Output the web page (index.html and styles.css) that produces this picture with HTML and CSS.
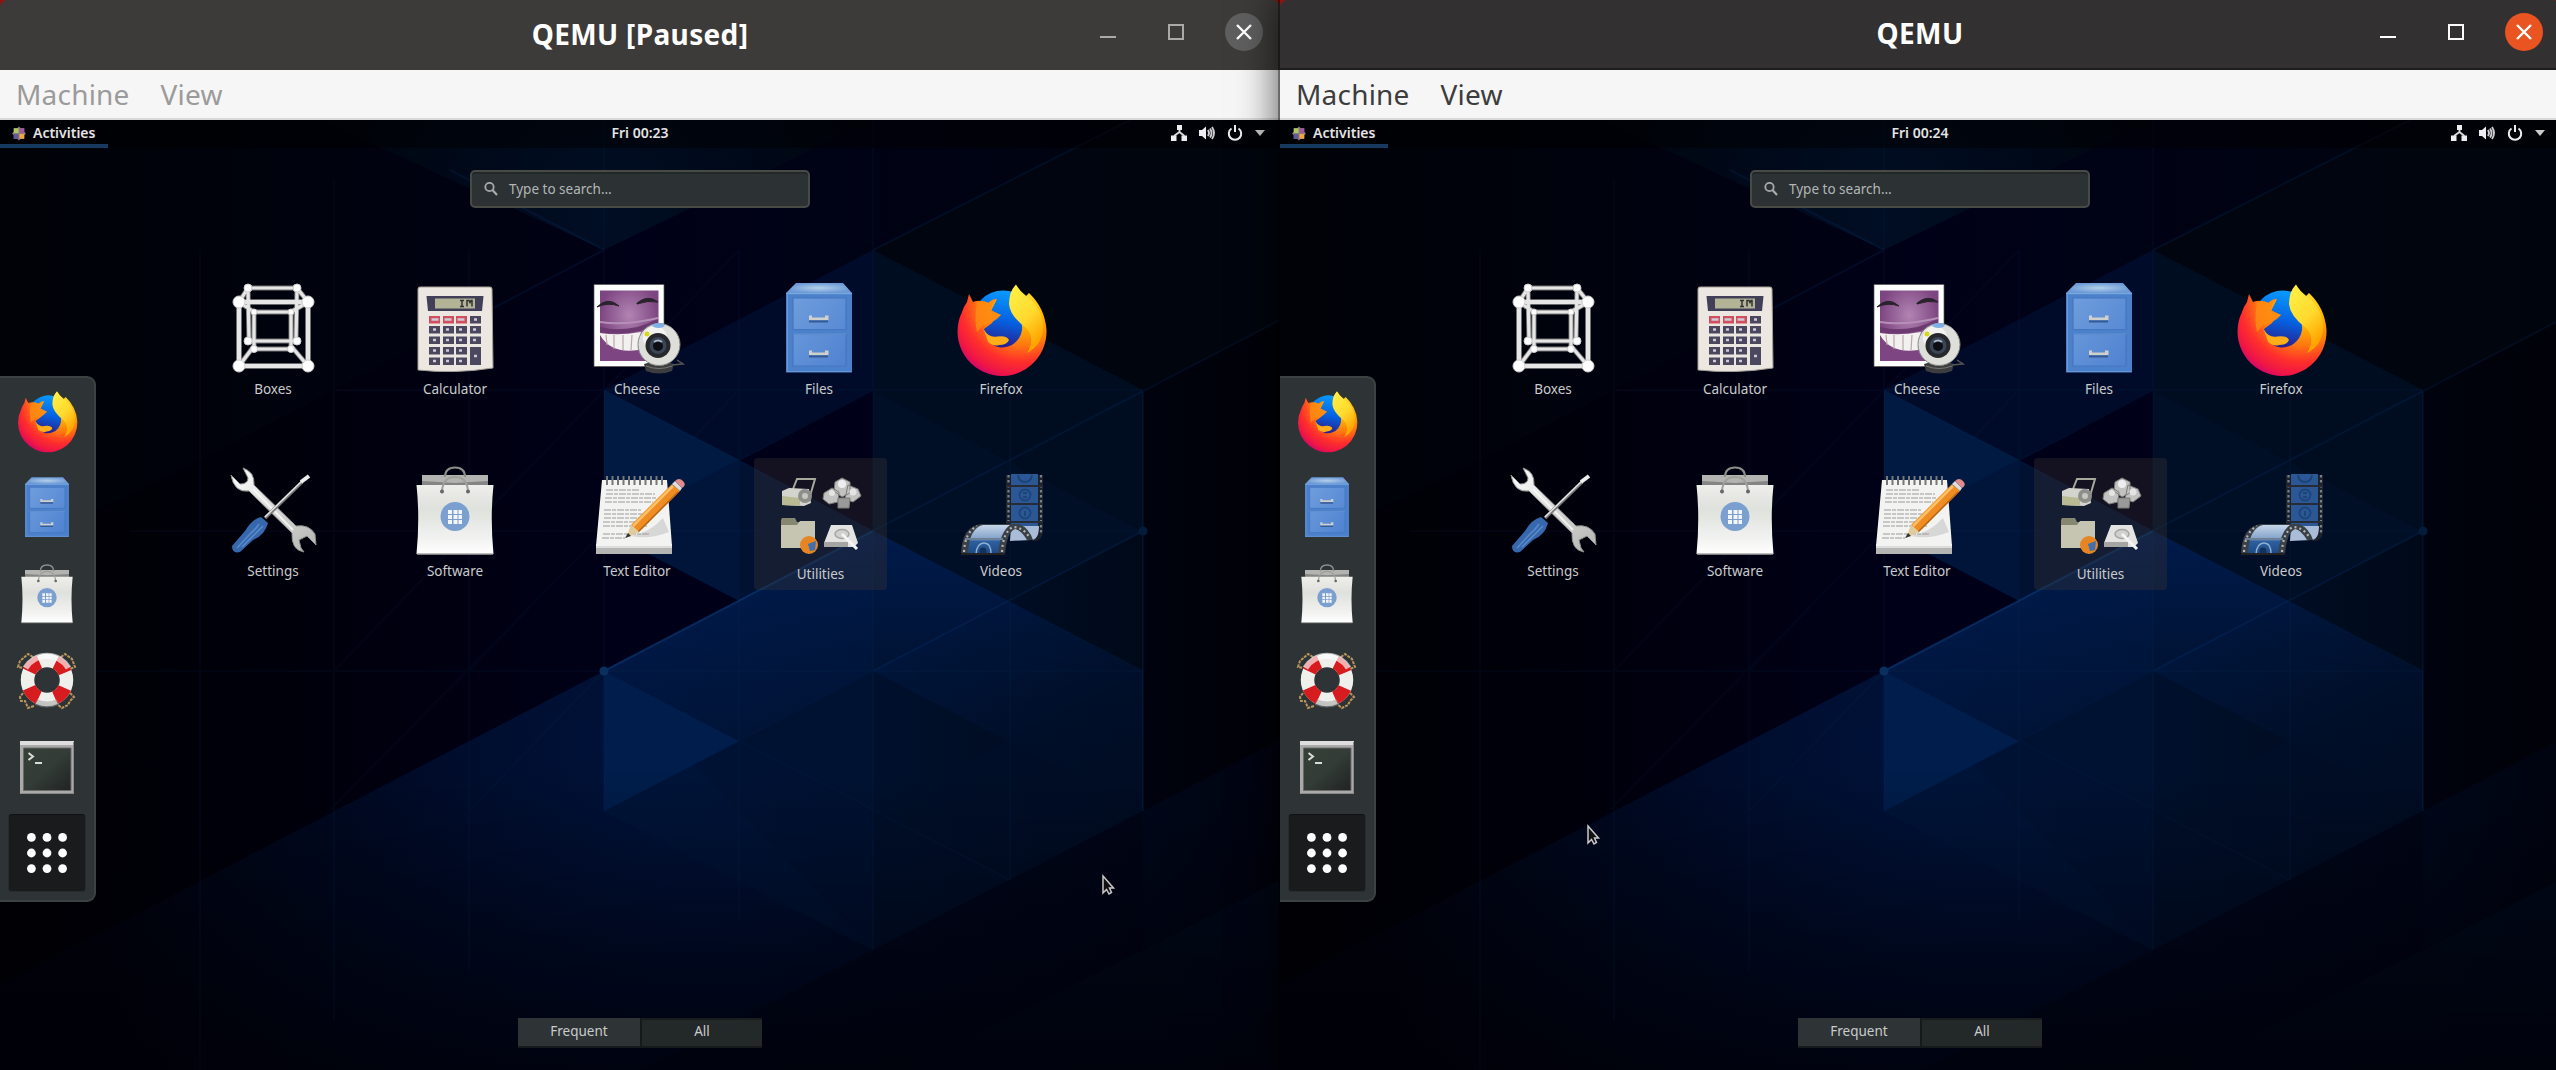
FILE: index.html
```html
<!DOCTYPE html>
<html lang="en">
<head>
<meta charset="utf-8">
<title>QEMU</title>
<link rel="stylesheet" href="styles.css">
</head>
<body>
<svg class="sprite" aria-hidden="true">
  <defs>
    <linearGradient id="gBase" x1="0" y1="0" x2="1" y2="0"><stop offset="0" stop-color="#000003"/><stop offset=".22" stop-color="#00000b"/><stop offset=".5" stop-color="#000118"/><stop offset=".8" stop-color="#000312"/><stop offset="1" stop-color="#000208"/></linearGradient>
    <linearGradient id="gHex" x1="0" y1="0" x2="1" y2="0"><stop offset="0" stop-color="#001a44"/><stop offset=".5" stop-color="#001535"/><stop offset="1" stop-color="#000b1c"/></linearGradient>
    <radialGradient id="gLow" gradientUnits="userSpaceOnUse" cx="700" cy="620" r="640"><stop offset="0" stop-color="#001540"/><stop offset=".45" stop-color="#000b28"/><stop offset="1" stop-color="#00020a"/></radialGradient>
    <radialGradient id="gTop" gradientUnits="userSpaceOnUse" cx="604" cy="100" r="330"><stop offset="0" stop-color="#000e24"/><stop offset="1" stop-color="#00030c"/></radialGradient>
    <linearGradient id="gFade" x1="0" y1="0" x2="0" y2="1"><stop offset="0" stop-color="#00256a" stop-opacity=".55"/><stop offset="1" stop-color="#001c4a" stop-opacity="0"/></linearGradient>
    <linearGradient id="gBottom" x1="0" y1="0" x2="0" y2="1"><stop offset="0" stop-color="#000007" stop-opacity="0"/><stop offset="1" stop-color="#000007" stop-opacity=".7"/></linearGradient>
    <radialGradient id="gFox" gradientUnits="userSpaceOnUse" cx="70" cy="22" r="86"><stop offset="0" stop-color="#ffe23c"/><stop offset=".3" stop-color="#ffb300"/><stop offset=".52" stop-color="#ff7a10"/><stop offset=".72" stop-color="#ff2f2c"/><stop offset=".88" stop-color="#ee1546"/><stop offset="1" stop-color="#c80078"/></radialGradient>
    <linearGradient id="gGlobe" x1=".6" y1="0" x2=".4" y2="1"><stop offset="0" stop-color="#0a9cff"/><stop offset=".5" stop-color="#0560e0"/><stop offset="1" stop-color="#30107a"/></linearGradient>
    <linearGradient id="gHorn" x1="0" y1="0" x2=".5" y2="1"><stop offset="0" stop-color="#fff34a"/><stop offset=".6" stop-color="#ffd92e"/><stop offset="1" stop-color="#ffa400"/></linearGradient>
    <linearGradient id="gBlue" x1="0" y1="0" x2="1" y2="1"><stop offset="0" stop-color="#6f9ddd"/><stop offset="1" stop-color="#4f82d0"/></linearGradient>
    <radialGradient id="gLid"><stop offset="0" stop-color="#b4cfea"/><stop offset="1" stop-color="#6c9ad6"/></radialGradient>
    <linearGradient id="gBag" x1="0" y1="0" x2="0" y2="1"><stop offset="0" stop-color="#eeeeea"/><stop offset=".35" stop-color="#dfe1dc"/><stop offset=".8" stop-color="#f3f4f2"/><stop offset="1" stop-color="#fff"/></linearGradient>
    <radialGradient id="gPurple" cx=".5" cy=".35"><stop offset="0" stop-color="#b184b2"/><stop offset="1" stop-color="#7d4581"/></radialGradient>
    <linearGradient id="gMetal" x1="0" y1="0" x2="1" y2="1"><stop offset="0" stop-color="#fff"/><stop offset="1" stop-color="#b4b4b2"/></linearGradient>
    <linearGradient id="gTerm" x1="0" y1="0" x2="1" y2="1"><stop offset="0" stop-color="#354139"/><stop offset=".5" stop-color="#333c36"/><stop offset="1" stop-color="#202223"/></linearGradient>
    <linearGradient id="gFilm" x1="0" y1="0" x2="0" y2="1"><stop offset="0" stop-color="#c5d6ea"/><stop offset=".5" stop-color="#7f9fc6"/><stop offset=".55" stop-color="#2f5f9e"/><stop offset="1" stop-color="#1d4a86"/></linearGradient>
  </defs>

  <symbol id="wallpaper" viewBox="0 0 1280 950">
    <rect width="1280" height="950" fill="url(#gBase)"/>
    <path d="M320 0 604 130 873 0z" fill="url(#gTop)"/>
    <path d="M320 0 604 130 200 340 0 440V0z" fill="#010612" opacity=".35"/>
    <path d="M1130 0 873 130 1143 270 1280 200V0z" fill="#00060f" opacity=".8"/>
    <path d="M604 551 0 865V950H1280V620L1143 691 873 830z" fill="url(#gLow)"/>
    <path d="M873 830 640 950H1280V760L1143 830V691z" fill="#000413" opacity=".55"/>
    <path d="M1143 830 1280 760V950H900z" fill="#000b1c" opacity=".7"/>
    <path d="M604 270 873 130 1143 270V691L873 830 604 691z" fill="url(#gHex)" opacity=".75"/>
    <path d="M604 270 873 130V271L739 340z" fill="#000b29"/>
    <path d="M873 130 1143 270V411L873 271z" fill="#000d20"/>
    <path d="M873 271 1143 411 873 551z" fill="#000e26"/>
    <path d="M739 341 873 271V411z" fill="#000019"/>
    <path d="M604 270 739 340 604 411z" fill="#001a42"/>
    <path d="M604 411 739 340V481z" fill="#001539"/>
    <path d="M739 340 873 411 739 481z" fill="#001132"/>
    <path d="M604 411 739 481 604 551z" fill="#000018"/>
    <path d="M604 551 873 411 1143 551V691L873 551 739 621z" fill="url(#gFade)"/>
    <path d="M604 551 739 621 604 691z" fill="#001d4b"/>
    <path d="M739 621 873 551V691z" fill="#001232"/>
    <path d="M604 691 739 621 873 691V830z" fill="#001236" opacity=".6"/>
    <path d="M873 691 1143 551V691L873 830z" fill="#000f29" opacity=".6"/>
    <rect y="650" width="1280" height="300" fill="url(#gBottom)"/>
    <g fill="none" stroke="#0a3c78" stroke-width="2">
      <path d="M604 551 873 411" opacity=".6"/>
      <path d="M873 411 1280 200M604 130 480 195M873 130 1130 0M450 50 604 130M873 551 1143 411M1143 270V691" opacity=".18"/>
      <path d="M0 551H1143M130 411H1143M334 270H1143M200 130V950M334 60V900M469 130V850M604 0V691M739 130V800M873 0V830M1010 240V760M604 270 334 551M739 130 469 411M469 551 739 270M604 551 469 691M604 691 1143 411M604 270 873 411 1143 551M739 621 1010 760M604 411 330 690" opacity=".08"/>
    </g>
    <circle cx="604" cy="551" r="4.500" fill="#0a3060"/><circle cx="1143" cy="411" r="4.500" fill="#041c3a"/>
  </symbol>

  <symbol id="boxes" viewBox="0 0 96 96">
    <g fill="none" stroke="#777" stroke-width="5"><path d="M23 10H72M23 10 24 63M72 10 71 63M29 34V71M66 34V71M29 34H66M23 63H72M29 71H66M14 24 23 10M83 24 72 10M14 88 29 68M83 88 66 68M14 24 29 34M83 24 66 34M14 24H83V88H14z"/></g>
    <g fill="none" stroke="#e6e6e6" stroke-width="3.200"><path d="M23 10H72M23 10 24 63M72 10 71 63M29 34V71M66 34V71M29 34H66M23 63H72M29 71H66M14 24 23 10M83 24 72 10M14 88 29 68M83 88 66 68M14 24 29 34M83 24 66 34"/><path stroke-width="4.600" d="M14 24H83V88H14z"/></g>
    <g fill="#fff" stroke="#ccc"><circle cx="14" cy="24" r="6"/><circle cx="83" cy="24" r="6"/><circle cx="14" cy="88" r="6"/><circle cx="83" cy="88" r="6"/><circle cx="23" cy="10" r="4"/><circle cx="72" cy="10" r="4"/><circle cx="23" cy="63" r="4"/><circle cx="72" cy="63" r="4"/><circle cx="29" cy="71" r="3.500"/><circle cx="66" cy="71" r="3.500"/><circle cx="29" cy="34" r="3"/><circle cx="66" cy="34" r="3"/></g>
  </symbol>

  <symbol id="calculator" viewBox="0 0 96 96">
    <path d="M11 11Q11 9 13 9H83Q85 9 85 11L86 90Q48 96 11 92z" fill="#ece7e1" stroke="#a59e96"/>
    <path d="M19.500 18H76.500L75 33H21z" fill="#414058"/><rect x="28" y="20.500" width="40" height="10" fill="#b3b496"/>
    <path d="M53 22.500h4M55 22.500v6M53 28.500h4M60 28.500v-6h2l1 2 1-2h1v6" stroke="#333" fill="none" stroke-width="1.500"/>
    <g fill="#4b475f"><path d="M63 38h11v7.500H63zM22 48h11v7.500H22zM36 48h11v7.500H36zM49 48h11v7.500H49zM63 48h11v7.500H63zM22 58.500h11v7.500H22zM36 58.500h11v7.500H36zM49 58.500h11v7.500H49zM63 58.500h11v7.500H63zM22 69h11v7.500H22zM36 69h11v7.500H36zM49 69h11v7.500H49zM22 79.500h11v7.500H22zM36 79.500h11v7.500H36zM49 79.500h11v7.500H49zM63 69h11v18H63z"/></g>
    <path d="M22 38h11v7.500H22zM36 38h11v7.500H36zM49 38h11v7.500H49z" fill="#cf4f5f"/>
    <path d="M24.500 41.500h7m6 0h7m6 0h7m9.500 0h3M26 51.500h3m10 0h3m10 0h3m11 0h3M26 62h3m10 0h3m10 0h3m11 0h3M26 72.500h3m10 0h3m10 0h3M26 83h3m10 0h3m10 0h3m12-5h3" stroke="#cfcbd8" stroke-width="2.500"/>
  </symbol>

  <symbol id="cheese" viewBox="0 0 96 96">
    <path d="M5 6.500H75V88.500H5z" fill="#fff" stroke="#555" stroke-width=".7"/><path d="M11 12.500H69.500V83H11z" fill="url(#gPurple)"/>
    <path d="M11 49Q40 56 69 41V46Q42 60 11 54z" fill="#6c3970"/><path d="M11 44Q35 48 69 40" stroke="#b68fb8" stroke-width="2" fill="none"/>
    <path d="M11 55Q30 58 52 54L49 72Q22 76 11 57z" fill="#f3f1ef"/><path d="M17 57 18 67M25 57V71M34 57V72M43 57 42 72" stroke="#b7a8a7" stroke-width="1.200"/>
    <path d="M8 29Q19 18 30 28Q19 24 8 29zM48 25Q59 16 69 24Q59 22 48 26z" fill="#2a222d" stroke="#2a222d"/>
    <path d="M55 86Q70 80 85 86L83 93Q70 98 57 93z" fill="#3c3d3e"/><path d="M57 88Q70 93 83 88" stroke="#777" fill="none"/><path d="M83 87 94 86 88 82" stroke="#555" stroke-width="1.500" fill="none"/>
    <circle cx="70" cy="66.500" r="21" fill="#dededb" stroke="#888"/><circle cx="66" cy="60" r="12" fill="#fff" opacity=".6"/>
    <circle cx="69" cy="67.500" r="12.500" fill="#26282b"/><circle cx="69" cy="67.500" r="8.500" fill="#3a4556"/><circle cx="69" cy="68" r="5" fill="#0d0e12"/><path d="M65 64q4-3 8 0" stroke="#aab7ca" stroke-width="2" fill="none"/>
    <ellipse cx="69.500" cy="47.500" rx="6" ry="2.500" fill="#7fb0e8"/><circle cx="58" cy="56" r="2.500" fill="#d6d81a"/>
  </symbol>

  <symbol id="files" viewBox="0 0 96 96">
    <path d="M25 5H72L81 15H15z" fill="url(#gLid)"/><path d="M15 15H81V94.500H15z" fill="#4b80cb"/><path d="M15 15.700H81" stroke="#86aee2"/>
    <g stroke="#4577c0" stroke-width="1.200" fill="url(#gBlue)"><path d="M22 20H75V51.500H22zM22 56H75V88H22z"/></g>
    <path d="M16.500 15V94M16 93.500H80M22 56H75" stroke="#6896d6" stroke-width="1.200"/>
    <path d="M38 43.500H57M38 78.500H57" stroke="#375b91" stroke-width="2"/><path d="M38 37.500h3v2h13v-2h3.500v4.500H38zM38 72.500h3v2h13v-2h3.500v4.500H38z" fill="#cfd0cc"/>
  </symbol>

  <symbol id="firefox" viewBox="0 0 96 96">
    <circle cx="50" cy="43" r="30.500" fill="url(#gGlobe)"/>
    <path d="M16 16 20 24Q27 21 36 25L40 22 44 21 38 33 48 37Q41 41 39 45L31 51 37 65A20 21 0 0 0 69 52Q70 40 61 30Q52 19 63 7Q67 13 73 18L76 15Q92 30 93.500 52A44.500 44.500 0 1 1 9 34Q11 28 14 24z" fill="url(#gFox)"/>
    <path d="M63 6.500Q66 13 73 18Q88 28 90 47Q91 66 74 75Q83 61 73 50Q57 38 56 26Q56 14 63 6.500z" fill="url(#gHorn)"/>
    <path d="M24 24Q31 22 35 25 39 21 43 21 38 28 38 32L48 37Q44 42 39 44Q29 46 24 54Q21 42 24 24z" fill="#ff8a12" opacity=".85"/>
    <path d="M31 52Q36 60 44 58.500Q54 57 56 62Q54 67 46 67Q41 69 35 64z" fill="#ffad18"/>
  </symbol>

  <symbol id="settings" viewBox="0 0 96 96">
    <path d="M18 8Q30 12 29 25L71 66Q84 64 90 74L91 85 82 76 74 80 76 88 79 92Q66 90 67 73L24 31Q9 33 6 15L15 24Q23 24 23 18z" fill="url(#gMetal)" stroke="#8d8d8b"/>
    <path d="M28 29 68 70" stroke="#fff" stroke-width="2" opacity=".7"/>
    <path d="M40 58 77 22" stroke="#777" stroke-width="3.500"/><path d="M40 57 77 21" stroke="#e5e5e3" stroke-width="1.500"/><path d="M76 22 84 16" stroke="#eee" stroke-width="4"/>
    <path d="M36 57 43 63Q40 75 28 80L15 92Q7 94 7 86L20 71Q27 59 36 57z" fill="#3668ae"/><path d="M34 64Q30 70 25 74L12 88M38 66 17 87" stroke="#5b8bcb" stroke-width="1.500" fill="none"/>
  </symbol>

  <symbol id="software" viewBox="0 0 96 96">
    <path d="M15 15H81V27H15z" fill="#b3b3b1"/><path d="M15 21 48 23 81 21V27H15z" fill="#858583"/>
    <path d="M38 17Q38 7.500 48 7.500T58 17" fill="none" stroke="#8f908c" stroke-width="2"/>
    <path d="M9.500 25H86.500Q83 58 86.500 94H9.500Q13 58 9.500 25z" fill="url(#gBag)"/><path d="M10 94H86" stroke="#a7a7a5" stroke-width="1.500"/>
    <path d="M35 31Q36 17 48 17T61 31" fill="none" stroke="#a0a09a" stroke-width="2"/><circle cx="35" cy="31.500" r="2" fill="#666"/><circle cx="61" cy="31.500" r="2" fill="#666"/>
    <circle cx="48" cy="56.500" r="14.500" fill="#7ba0cf"/><path d="M41 50h4v4h-4zM46.500 50h4v4h-4zM51.500 50h3.500v4h-3.500zM41 55h4v4h-4zM46.500 55h4v4h-4zM51.500 55h3.500v4h-3.500zM41 60h4v4h-4zM46.500 60h4v4h-4zM51.500 60h3.500v4h-3.500z" fill="#f2f5fa"/>
  </symbol>

  <symbol id="editor" viewBox="0 0 96 96">
    <path d="M7 84H83V94H7z" fill="#b5b5b3"/><path d="M13 20H78L83 86H7z" fill="#f3f3f1"/><path d="M7 87H83" stroke="#ddd" stroke-width="2"/>
    <path d="M18 16v9m5.500-9v9m5.500-9v9m5.500-9v9m5.500-9v9m5.500-9v9m5.500-9v9m5.500-9v9m5.500-9v9m5.500-9v9m5.500-9v9" stroke="#777" stroke-width="2"/>
    <path d="M17 30H50M17 34H66M16 38H68M16 42H64M15 50H52M15 54H66M15 58H62M14 62H60M14 66H58M14 74H60M13 78H36" stroke="#9c9c9a" stroke-width="1.200" stroke-dasharray="7 1 4 1"/>
    <path d="M42 76Q60 73 74 58L80 72Q60 80 42 76z" fill="#999" opacity=".3"/>
    <path d="M83 24 91 31 50 72 42 65z" fill="#ef8d24"/><path d="M84 26 44 66" stroke="#ffc064" stroke-width="2.500"/><path d="M89 32 49 72" stroke="#b8661a" stroke-width="1.500"/>
    <path d="M83 24 86 21 93 28 91 31z" fill="#ddd"/><path d="M86 21Q90 17 94 21T93 28z" fill="#e28b8b"/><path d="M42 65 50 72 37 78z" fill="#e0cb9d"/><path d="M39 73 42 76 36 78z" fill="#333"/>
  </symbol>

  <symbol id="utilities" viewBox="0 0 133 90">
    <path d="M39 31 43 21 61 21 56 38" fill="none" stroke="#a8a89c" stroke-width="2"/><path d="M28 33 35 30 55 31 57 45 50 48 28 47z" fill="#d4d4ce"/><path d="M28 38 46 40V48L28 47z" fill="#b9b994"/><circle cx="51" cy="38" r="7" fill="#8e8e8a"/><circle cx="51" cy="38" r="3" fill="#c6c6c3"/>
    <g fill="#c2c2c0" stroke="#7b7b79"><path d="M70 35 78 30 85 34 84 44 75 46 69 41zM94 27 104 31 107 38 99 44 91 41zM81 24 88 20 96 24 96 35 88 39 80 33z"/><path d="M84 40H96L95 50H84z" fill="#999"/></g><circle cx="88" cy="26" r="4" fill="#eee"/><circle cx="78" cy="35" r="3" fill="#e4e4e4"/><circle cx="99" cy="34" r="3.500" fill="#e4e4e4"/>
    <path d="M28 60H41L43 64H61V90H27V62z" fill="#87876f"/><path d="M27 67 43 67 46 63H61V90H27z" fill="#c5c5b1"/><circle cx="55" cy="87" r="9" fill="#e58524"/><path d="M54 86 62 83 61 92 56 93z" fill="#426fb0"/>
    <path d="M77 67H98L104 85 100 89H70V85z" fill="#e3e3e1"/><path d="M70 84H94V89H70z" fill="#a5a5a3"/><ellipse cx="88" cy="76" rx="7" ry="4.500" fill="#d0d0ce" stroke="#a5a5a3" stroke-width="1.500"/><path d="M88 76 103 91" stroke="#f5f5f5" stroke-width="3"/>
  </symbol>

  <symbol id="videos" viewBox="0 0 96 96">
    <path d="M53 15H90V72Q89 82 80 81L53 68z" fill="#25282d" opacity=".75"/><path d="M58 14H85V66H58z" fill="#2b5894"/><path d="M58 66H86Q86 80 78 80L57 81z" fill="#a9bdd8"/>
    <path d="M55.500 15V64M88 15V74" stroke="#7b8085" stroke-width="2.200" stroke-dasharray="2.500 2.500"/>
    <path d="M53 26H89M53 44H89M53 62H89" stroke="#262b35" stroke-width="1.800"/>
    <g fill="none" stroke="#1c4479" stroke-width="1.800"><path d="M65 15Q66 22 72 22T79 15"/><circle cx="72" cy="35" r="5.500"/><circle cx="72" cy="53" r="5.500"/><path d="M70 33h4M70 37h4M72 51v5"/></g>
    <path d="M8 94Q9 66 28 64L66 64Q76 68 80 80L74 80Q68 70 62 69Q54 72 52 94z" fill="#3a4047"/>
    <path d="M15 94Q16 68 30 65H57Q47 72 45 94z" fill="url(#gFilm)"/><path d="M12 79H50" stroke="#6c8099" stroke-width="2"/>
    <path d="M11 92Q12 72 24 66M49 92Q50 72 60 67 70 67 77 78" fill="none" stroke="#b5b5b0" stroke-width="2.200" stroke-dasharray="2 3"/>
    <path d="M23 94Q24 83 31 83T38 94" fill="none" stroke="#8fb0d6" stroke-width="1.500"/><circle cx="30" cy="91" r="3.500" fill="#12315c"/><path d="M8 94H52" stroke="#222" stroke-width="2"/>
  </symbol>

  <symbol id="help" viewBox="0 0 64 64">
    <path d="M18 10 13 7 5 14 3 20 8 21M46 10 50 7 57 12 60 20 55 22M8 46 5 50 6 54 10 54 13 61 19 59M55 46 59 50 55 54 53 58 47 61 43 58" fill="none" stroke="#b9965b" stroke-width="2" stroke-dasharray="3 1"/>
    <circle cx="32" cy="33" r="19.500" fill="none" stroke="#efefec" stroke-width="13.500"/>
    <circle cx="32" cy="33" r="19.500" fill="none" stroke="#d61c1f" stroke-width="13.500" stroke-dasharray="14 16.630" stroke-dashoffset="-8.300"/>
    <path d="M10.500 21A25 25 0 0 1 53.500 21" fill="none" stroke="#fff" stroke-width="6" opacity=".65"/><path d="M21 55Q32 60 43 55" fill="none" stroke="#999" stroke-width="6" opacity=".5"/>
  </symbol>

  <symbol id="terminal" viewBox="0 0 64 64">
    <path d="M5 8.500H59V61H5z" fill="#aaa"/><path d="M5 10H59" stroke="#dedede" stroke-width="4"/><path d="M5.500 60.500H58.500V9" stroke="#888" fill="none"/><path d="M8.500 15H56V57.500H8.500z" fill="url(#gTerm)" stroke="#6a6a6a"/>
    <path d="M13.500 20 18 23.500 13.500 27M20 30H27" fill="none" stroke="#d8ddd8" stroke-width="2"/>
  </symbol>

  <symbol id="dots" viewBox="0 0 78 76"><g fill="#fff"><circle cx="23" cy="22" r="4.500"/><circle cx="39" cy="22" r="4.500"/><circle cx="55" cy="22" r="4.500"/><circle cx="23" cy="38" r="4.500"/><circle cx="39" cy="38" r="4.500"/><circle cx="55" cy="38" r="4.500"/><circle cx="23" cy="54" r="4.500"/><circle cx="39" cy="54" r="4.500"/><circle cx="55" cy="54" r="4.500"/></g></symbol>

  <symbol id="distro" viewBox="0 0 16 16"><path d="M8 0 10 2H14V6L16 8 14 10V14H10L8 16 6 14H2V10L0 8 2 6V2H6z" fill="#8d7a86"/><path d="M2 2H7.500V7.500H2z" fill="#a9c95c"/><path d="M8.500 2H14V7.500H8.500z" fill="#a25a9c"/><path d="M8.500 8.500H14V14H8.500z" fill="#efa93a"/><path d="M2 8.500H7.500V14H2z" fill="#605a9e"/></symbol>
  <symbol id="network" viewBox="0 0 16 16"><path d="M6 0h5v5H6zM0 10.500h5.500V16H0zM10.500 10.500H16V16h-5.500z" fill="#eee"/><path d="M8.500 5v3M3 11 8.500 7 13.500 11" stroke="#ddd" stroke-width="1.800" fill="none"/></symbol>
  <symbol id="volume" viewBox="0 0 16 16"><path d="M0 5H3L7 1.500V14.500L3 11H0z" fill="#eee"/><path d="M9 5Q11 8 9 11M11 3.500Q14 8 11 12.500M13 2Q17 8 13 14" stroke="#ccc" stroke-width="1.900" fill="none"/></symbol>
  <symbol id="power" viewBox="0 0 16 16"><path d="M4.500 3.500A6.200 6.200 0 1 0 11.500 3.500M8 0V7" stroke="#eee" stroke-width="2" fill="none"/></symbol>
  <symbol id="caret" viewBox="0 0 10 6"><path d="M0 0H10L5 6z" fill="#ccc"/></symbol>
  <symbol id="lens" viewBox="0 0 14 14"><circle cx="5.500" cy="5" r="4.200" fill="none" stroke="#a9abab" stroke-width="1.800"/><path d="M8.500 8 13 13" stroke="#a9abab" stroke-width="2.200"/></symbol>
  <symbol id="pointer" viewBox="0 0 12 20"><path d="M1 1V18L4.500 14.500 7 19 9.500 17.500 7.500 13H11.500z" fill="#111" stroke="#c9c9c9" stroke-width="1.500"/></symbol>
  <symbol id="min" viewBox="0 0 16 16"><path d="M0 13H16" stroke="currentColor" stroke-width="2"/></symbol>
  <symbol id="max" viewBox="0 0 16 16"><path d="M1 1H15V15H1z" stroke="currentColor" stroke-width="2" fill="none"/></symbol>
  <symbol id="close" viewBox="0 0 16 16"><path d="M1 1 15 15M15 1 1 15" stroke="currentColor" stroke-width="2.400"/></symbol>
</svg>

<main class="workspace">
  <section class="window window--paused">
    <header class="titlebar">
      <h1 class="title">QEMU [Paused]</h1>
      <div class="controls"><svg class="ctl"><use href="#min"/></svg><svg class="ctl"><use href="#max"/></svg><span class="close"><svg class="ctl"><use href="#close"/></svg></span></div>
    </header>
    <nav class="menubar"><span>Machine</span><span>View</span></nav>
    <div class="guest">
      <svg class="wallpaper"><use href="#wallpaper"/></svg>
      <div class="panel">
        <div class="activities"><svg class="distro"><use href="#distro"/></svg>Activities</div>
        <div class="clock">Fri 00:23</div>
        <div class="status"><svg><use href="#network"/></svg><svg><use href="#volume"/></svg><svg><use href="#power"/></svg><svg class="caret"><use href="#caret"/></svg></div>
      </div>
      <div class="search"><svg class="lens"><use href="#lens"/></svg>Type to search…</div>
      <div class="overview">
        <aside class="dash">
          <svg><use href="#firefox"/></svg><svg><use href="#files"/></svg><svg><use href="#software"/></svg><svg><use href="#help"/></svg><svg><use href="#terminal"/></svg>
          <div class="show-apps"><svg><use href="#dots"/></svg></div>
        </aside>
        <div class="apps">
          <div class="app"><svg><use href="#boxes"/></svg>Boxes</div>
          <div class="app"><svg><use href="#calculator"/></svg>Calculator</div>
          <div class="app"><svg><use href="#cheese"/></svg>Cheese</div>
          <div class="app"><svg><use href="#files"/></svg>Files</div>
          <div class="app"><svg><use href="#firefox"/></svg>Firefox</div>
          <div class="app"><svg><use href="#settings"/></svg>Settings</div>
          <div class="app"><svg><use href="#software"/></svg>Software</div>
          <div class="app"><svg><use href="#editor"/></svg>Text Editor</div>
          <div class="app folder"><svg><use href="#utilities"/></svg>Utilities</div>
          <div class="app"><svg><use href="#videos"/></svg>Videos</div>
        </div>
      </div>
      <div class="switcher"><span class="tab">Frequent</span><span class="tab tab--on">All</span></div>
      <svg class="pointer pointer--right"><use href="#pointer"/></svg>
    </div>
  </section>

  <section class="window window--active">
    <header class="titlebar">
      <h1 class="title">QEMU</h1>
      <div class="controls"><svg class="ctl"><use href="#min"/></svg><svg class="ctl"><use href="#max"/></svg><span class="close"><svg class="ctl"><use href="#close"/></svg></span></div>
    </header>
    <nav class="menubar"><span>Machine</span><span>View</span></nav>
    <div class="guest">
      <svg class="wallpaper"><use href="#wallpaper"/></svg>
      <div class="panel">
        <div class="activities"><svg class="distro"><use href="#distro"/></svg>Activities</div>
        <div class="clock">Fri 00:24</div>
        <div class="status"><svg><use href="#network"/></svg><svg><use href="#volume"/></svg><svg><use href="#power"/></svg><svg class="caret"><use href="#caret"/></svg></div>
      </div>
      <div class="search"><svg class="lens"><use href="#lens"/></svg>Type to search…</div>
      <div class="overview">
        <aside class="dash">
          <svg><use href="#firefox"/></svg><svg><use href="#files"/></svg><svg><use href="#software"/></svg><svg><use href="#help"/></svg><svg><use href="#terminal"/></svg>
          <div class="show-apps"><svg><use href="#dots"/></svg></div>
        </aside>
        <div class="apps">
          <div class="app"><svg><use href="#boxes"/></svg>Boxes</div>
          <div class="app"><svg><use href="#calculator"/></svg>Calculator</div>
          <div class="app"><svg><use href="#cheese"/></svg>Cheese</div>
          <div class="app"><svg><use href="#files"/></svg>Files</div>
          <div class="app"><svg><use href="#firefox"/></svg>Firefox</div>
          <div class="app"><svg><use href="#settings"/></svg>Settings</div>
          <div class="app"><svg><use href="#software"/></svg>Software</div>
          <div class="app"><svg><use href="#editor"/></svg>Text Editor</div>
          <div class="app folder"><svg><use href="#utilities"/></svg>Utilities</div>
          <div class="app"><svg><use href="#videos"/></svg>Videos</div>
        </div>
      </div>
      <div class="switcher"><span class="tab">Frequent</span><span class="tab tab--on">All</span></div>
      <svg class="pointer pointer--left"><use href="#pointer"/></svg>
    </div>
  </section>
</main>
</body>
</html>
```
FILE: styles.css
```css
* { box-sizing: border-box; }
body { margin: 0; background: #8c1414; overflow: hidden; font-family: "Noto Sans", "Open Sans", sans-serif; }
svg { display: block; overflow: visible; }
symbol { overflow: visible; }
.sprite { position: absolute; width: 0; height: 0; }

.workspace { display: flex; width: 2556px; height: 1070px; overflow: hidden; }
.window { flex: none; width: 1280px; height: 1070px; position: relative; }
.window--active { box-shadow: -1px 0 0 1px rgba(0,0,0,.35), 0 0 36px 4px rgba(0,0,0,.6); }

.titlebar { display: grid; grid-template-columns: 1fr auto 1fr; align-items: center; height: 70px; background: #3d3b39; color: #fff; border-radius: 8px 8px 0 0; }
.window--active .titlebar { background: #333031; border-bottom: 2px solid #1f1e1f; }
.title { grid-column: 2; margin: 0; font-size: 28px; line-height: 40px; font-weight: 700; letter-spacing: .35px; padding-bottom: 3px; }
.controls { display: flex; justify-content: flex-end; align-items: center; gap: 52px; height: 38px; padding-right: 17px; margin-bottom: 6px; color: #aaa; }
.window--active .controls { color: #fff; margin-bottom: 4px; }
.ctl { width: 16px; height: 16px; }
.close { display: grid; place-items: center; width: 38px; height: 38px; margin-left: -11px; border-radius: 50%; background: #5f5f5f; color: #fff; }
.window--active .close { background: #e95420; }

.menubar { display: flex; gap: 31px; height: 50px; padding-left: 16px; background: #f6f6f6; border-bottom: 2px solid #d9d9d9; color: #9b9b9b; font-size: 28px; letter-spacing: .2px; }
.menubar span { height: 48px; line-height: 49px; }
.window--active .menubar { color: #3d3d3d; }

.guest { position: relative; height: 950px; overflow: hidden; background: #000008; color: #c9cbcc; font-size: 13.5px; }
.wallpaper { position: absolute; inset: 0; width: 1280px; height: 950px; }
.panel { position: relative; display: grid; grid-template-columns: 1fr auto 1fr; height: 28px; background: rgba(0,0,0,.5); color: #e4e4e4; font-weight: 600; font-size: 14px; line-height: 26px; }
.activities { display: flex; align-items: center; gap: 7px; width: 108px; height: 28px; padding: 2px 0 0 12px; border-bottom: 4px solid #16395f; line-height: 22px; }
.distro { width: 14px; height: 15px; margin-top: 1px; }
.status { display: flex; justify-content: flex-end; align-items: center; gap: 12px; height: 26px; padding-right: 15px; }
.status svg { width: 16px; height: 16px; }
.status .caret { width: 10px; height: 6px; margin-left: 0; }

.search { position: relative; display: flex; align-items: center; gap: 11px; width: 340px; height: 38px; margin: 22px auto 0; padding: 0 12px 1px; border: 2px solid #484a46; border-radius: 5px; background: #2c3133; box-shadow: inset 0 2px 0 #222728; color: #b3b6b6; }
.lens { width: 14px; height: 14px; }

.overview { position: relative; display: flex; align-items: flex-start; height: 810px; }
.dash { display: flex; flex: none; flex-direction: column; align-items: center; gap: 22.600px; width: 96px; height: 526px; margin-top: 168px; padding-top: 9px; border: 2px solid #3c4142; border-left: 0; border-radius: 0 9px 9px 0; background: #2e3335; }
.dash > svg { width: 64px; height: 64px; flex: none; }
.show-apps { flex: none; width: 76px; height: 76px; margin-top: -5px; border-radius: 3px; background: #1a1b1c; box-shadow: 0 -1px 0 #101112, 0 0 0 1px #272b2d; }
.show-apps svg { width: 76px; height: 76px; }
.apps { display: grid; grid-template-columns: repeat(5, 182px); grid-auto-rows: 182px; margin: 70px 0 0 86px; }
.app { display: flex; flex-direction: column; align-items: center; gap: 5px; line-height: 20px; }
.app svg { width: 96px; height: 96px; }
.folder { width: 133px; height: 132px; margin: -2px 0 0 26px; gap: 16px; border-radius: 4px; background: rgba(62,56,54,.32); }
.folder svg { width: 133px; height: 90px; }

.switcher { position: relative; display: flex; justify-content: center; }
.tab { width: 122px; height: 30px; background: #2e3335; border-bottom: 2px solid #171a1b; text-align: center; line-height: 27px; }
.tab--on { background: #232828; border-left: 2px solid #15191a; border-top: 2px solid #191d1e; line-height: 23px; }
.pointer { position: absolute; width: 12px; height: 20px; }
.pointer--right { left: 1102px; top: 755px; }
.pointer--left { left: 307px; top: 705px; }
```
